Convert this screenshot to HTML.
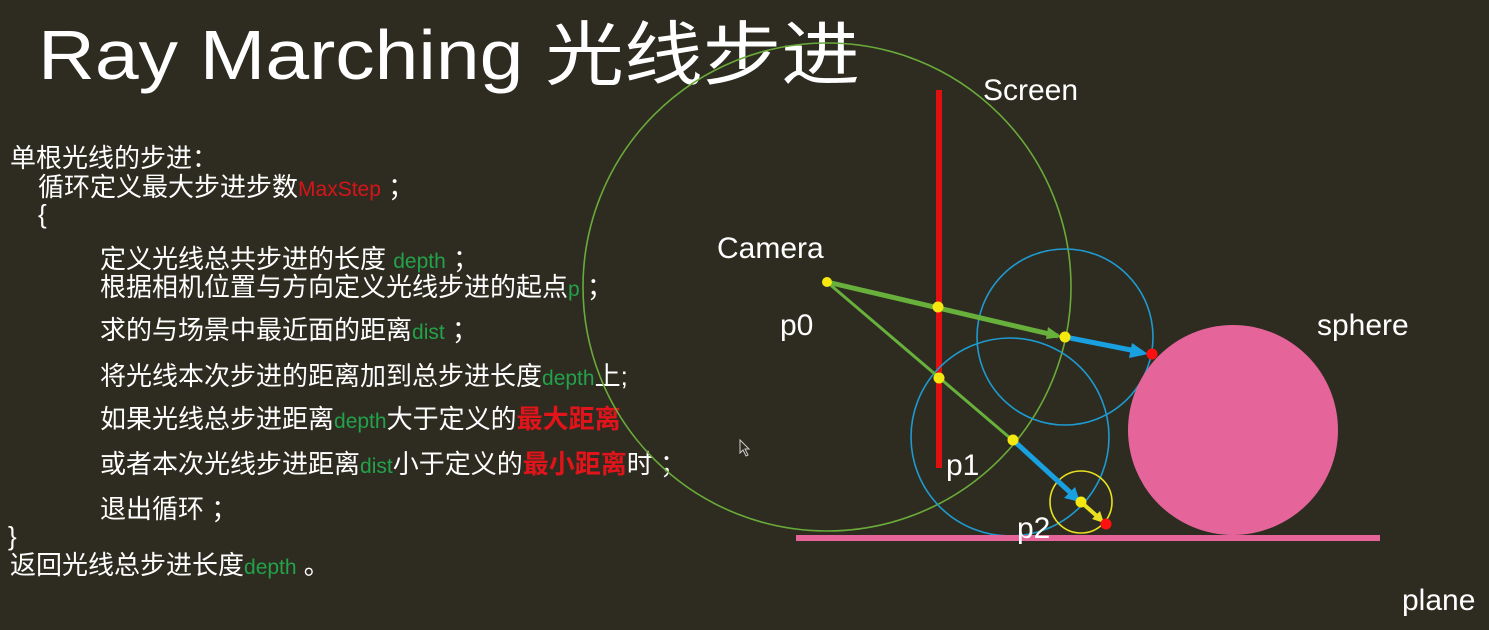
<!DOCTYPE html>
<html><head><meta charset="utf-8"><style>
html,body{margin:0;padding:0;background:#2e2c20;}
svg{display:block}
text{font-family:"Liberation Sans","Noto Sans CJK SC",sans-serif;}
.t{fill:#fff;font-size:26px}
.g{fill:#22a24a}
.r{fill:#e0141a;font-weight:bold}
.rn{fill:#d8141a}
.l{fill:#fff;font-size:30px}
</style></head><body>
<svg width="1489" height="630" viewBox="0 0 1489 630" xmlns="http://www.w3.org/2000/svg">
<rect width="1489" height="630" fill="#2e2c20"/>
<text x="38" y="79" fill="#fff" font-size="70" textLength="822" lengthAdjust="spacingAndGlyphs">Ray Marching 光线步进</text>

<text class="t" x="10" y="167">单根光线的步进：</text>
<text class="t" x="38" y="196">循环定义最大步进步数<tspan class="rn" font-size="21">MaxStep</tspan> ；</text>
<text class="t" x="38" y="223">{</text>
<text class="t" x="100" y="268">定义光线总共步进的长度 <tspan class="g" font-size="21">depth</tspan> ；</text>
<text class="t" x="100" y="296">根据相机位置与方向定义光线步进的起点<tspan class="g" font-size="21">p</tspan> ；</text>
<text class="t" x="100" y="339">求的与场景中最近面的距离<tspan class="g" font-size="21">dist</tspan> ；</text>
<text class="t" x="100" y="385">将光线本次步进的距离加到总步进长度<tspan class="g" font-size="21">depth</tspan>上;</text>
<text class="t" x="100" y="428">如果光线总步进距离<tspan class="g" font-size="21">depth</tspan>大于定义的<tspan class="r">最大距离</tspan></text>
<text class="t" x="100" y="473">或者本次光线步进距离<tspan class="g" font-size="21">dist</tspan>小于定义的<tspan class="r">最小距离</tspan>时 ；</text>
<text class="t" x="100" y="518">退出循环 ；</text>
<text class="t" x="8" y="545">}</text>
<text class="t" x="10" y="574">返回光线总步进长度<tspan class="g" font-size="21">depth</tspan> 。</text>

<!-- diagram -->
<circle cx="827" cy="287" r="244" fill="none" stroke="#6aaa3a" stroke-width="1.6"/>
<line x1="939" y1="90" x2="939" y2="468" stroke="#e01010" stroke-width="6"/>
<circle cx="1065" cy="337" r="88" fill="none" stroke="#1e9ad0" stroke-width="1.6"/>
<circle cx="1010" cy="437" r="99" fill="none" stroke="#1e9ad0" stroke-width="1.6"/>
<circle cx="1081" cy="502" r="31" fill="none" stroke="#e8e020" stroke-width="1.6"/>
<circle cx="1233" cy="430" r="105" fill="#e5649a"/>
<rect x="796" y="535" width="584" height="6" fill="#e5649a"/>

<line x1="827" y1="282" x2="1058" y2="336" stroke="#68b03c" stroke-width="5"/>
<polygon points="1062,337 1048,327 1046,339" fill="#68b03c"/>
<line x1="827" y1="282" x2="1010" y2="438" stroke="#68b03c" stroke-width="3"/>
<line x1="1065" y1="337" x2="1136" y2="351" stroke="#18a0e0" stroke-width="5"/>
<polygon points="1148,354 1132,343 1129,358" fill="#18a0e0"/>
<line x1="1013" y1="440" x2="1072" y2="494" stroke="#18a0e0" stroke-width="5"/>
<polygon points="1080,502 1075,487 1064,498" fill="#18a0e0"/>
<line x1="1081" y1="502" x2="1098" y2="517" stroke="#e8e020" stroke-width="4"/>
<polygon points="1104,523 1100,511 1092,519" fill="#e8e020"/>

<g fill="#f4e810">
<circle cx="827" cy="282" r="5"/><circle cx="938" cy="307" r="5.5"/><circle cx="1065" cy="337" r="5.5"/>
<circle cx="939" cy="378" r="5.5"/><circle cx="1013" cy="440" r="5.5"/><circle cx="1081" cy="502" r="5.5"/>
</g>
<circle cx="1152" cy="354" r="5.5" fill="#ff1010"/>
<circle cx="1106" cy="524" r="5.5" fill="#ff1010"/>

<text class="l" x="983" y="100">Screen</text>
<text class="l" x="717" y="258">Camera</text>
<text class="l" x="780" y="335">p0</text>
<text class="l" x="946" y="475">p1</text>
<text class="l" x="1017" y="538">p2</text>
<text class="l" x="1317" y="335">sphere</text>
<text class="l" x="1402" y="610">plane</text>
<path d="M740,440 L740,453 L743,450 L746,456 L748,455 L745,449 L749,449 Z" fill="none" stroke="#ccc" stroke-width="1"/>
</svg>
</body></html>
